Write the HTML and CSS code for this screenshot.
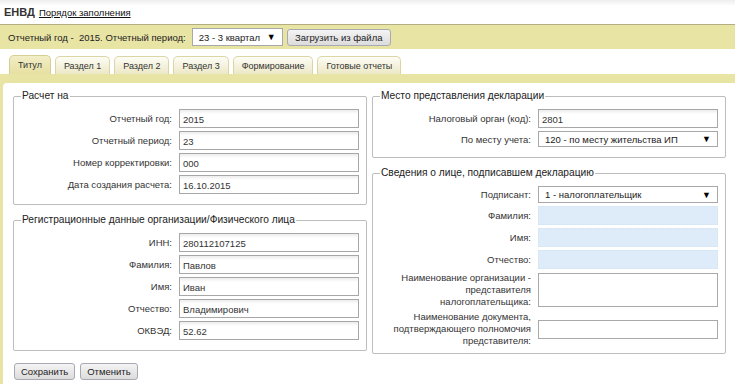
FILE: index.html
```html
<!DOCTYPE html>
<html lang="ru">
<head>
    <meta charset="UTF-8">
    <title>ЕНВД</title>
    <link rel="stylesheet" href="styles.css">
</head>
<body>

<div class="header">
    <span class="title">ЕНВД</span>
    <a href="#" class="help-link">Порядок заполнения</a>
</div>

<div class="toolbar">
    <span>Отчетный год -&nbsp; 2015. Отчетный период:</span>
    <div class="select select-period">23 - 3 квартал <span class="arrow">▼</span></div>
    <button class="btn btn-load">Загрузить из файла</button>
</div>

<ul class="tabs">
    <li class="tab active">Титул</li>
    <li class="tab">Раздел 1</li>
    <li class="tab">Раздел 2</li>
    <li class="tab">Раздел 3</li>
    <li class="tab">Формирование</li>
    <li class="tab">Готовые отчеты</li>
</ul>

<div class="tab-panel">
    <div class="panel-body">
        <div class="columns">
            <div class="column">
                <fieldset>
                    <legend>Расчет на</legend>
                    <div class="form-grid">
                        <label>Отчетный год:</label>
                        <input type="text" value="2015">
                        <label>Отчетный период:</label>
                        <input type="text" value="23">
                        <label>Номер корректировки:</label>
                        <input type="text" value="000">
                        <label>Дата создания расчета:</label>
                        <input type="text" value="16.10.2015">
                    </div>
                </fieldset>

                <fieldset>
                    <legend>Регистрационные данные организации/Физического лица</legend>
                    <div class="form-grid">
                        <label>ИНН:</label>
                        <input type="text" value="280112107125">
                        <label>Фамилия:</label>
                        <input type="text" value="Павлов">
                        <label>Имя:</label>
                        <input type="text" value="Иван">
                        <label>Отчество:</label>
                        <input type="text" value="Владимирович">
                        <label>ОКВЭД:</label>
                        <input type="text" value="52.62">
                    </div>
                </fieldset>
            </div>

            <div class="column">
                <fieldset>
                    <legend>Место представления декларации</legend>
                    <div class="form-grid">
                        <label>Налоговый орган (код):</label>
                        <input type="text" value="2801">
                        <label>По месту учета:</label>
                        <div class="select select-place">120 - по месту жительства ИП <span class="arrow">▼</span></div>
                    </div>
                </fieldset>

                <fieldset class="signer">
                    <legend>Сведения о лице, подписавшем декларацию</legend>
                    <div class="form-grid">
                        <label>Подписант:</label>
                        <div class="select select-signer">1 - налогоплательщик <span class="arrow">▼</span></div>
                        <label>Фамилия:</label>
                        <input type="text" class="disabled" disabled>
                        <label>Имя:</label>
                        <input type="text" class="disabled" disabled>
                        <label>Отчество:</label>
                        <input type="text" class="disabled" disabled>
                        <label class="multi">Наименование организации - представителя налогоплательщика:</label>
                        <textarea class="area-tall"></textarea>
                        <label class="multi">Наименование документа, подтверждающего полномочия представителя:</label>
                        <textarea class="area-short"></textarea>
                    </div>
                </fieldset>
            </div>
        </div>

        <div class="actions">
            <button class="btn">Сохранить</button>
            <button class="btn">Отменить</button>
        </div>
    </div>
</div>

</body>
</html>
```

FILE: styles.css
```css
body {
    margin: 0;
    padding: 0;
    font-family: "Liberation Sans", Arial, sans-serif;
    font-size: 9.5px;
    color: #222;
    background-color: #fff;
}
.header {
    height: 24px;
    padding-left: 4px;
    display: flex;
    align-items: center;
    gap: 4px;
    background: linear-gradient(#eeeeee, #ffffff 6px);
}
.title {
    font-size: 11px;
    font-weight: bold;
    color: #333;
}
.help-link {
    color: #111;
    font-size: 9.5px;
}
.toolbar {
    height: 24px;
    border-top: 1px solid #b3ad82;
    background-color: #e8e4a4;
    display: flex;
    align-items: center;
    padding-left: 8px;
    font-size: 9.5px;
}
.toolbar > span {
    margin-right: 6px;
}
.select {
    position: relative;
    background-color: #fff;
    border: 1px solid #a8a8a8;
    box-sizing: border-box;
    font-size: 9.5px;
    color: #222;
    padding-left: 6px;
    display: flex;
    align-items: center;
}
.select .arrow {
    position: absolute;
    right: 6px;
    font-size: 9px;
    color: #000;
}
.select-period {
    width: 91px;
    height: 18px;
}
.btn {
    font-family: "Liberation Sans", Arial, sans-serif;
    font-size: 9.5px;
    color: #222;
    background: linear-gradient(#f4f4f4, #dcdcdc);
    border: 1px solid #a9a9b4;
    border-radius: 3px;
    padding: 0 8px;
    height: 17px;
    cursor: pointer;
}
.btn-load {
    margin-left: 4px;
    width: 104px;
    padding: 0;
}
.tabs {
    list-style: none;
    margin: 6px 0 0 0;
    padding: 0 0 0 9px;
    display: flex;
    gap: 4px;
    height: 19px;
    align-items: flex-end;
}
.tab {
    height: 18px;
    box-sizing: border-box;
    padding: 0 8px;
    font-size: 9px;
    color: #333;
    display: flex;
    align-items: center;
    border: 1px solid #dcd6a6;
    border-bottom: none;
    border-radius: 5px 5px 0 0;
    background: linear-gradient(#fdfdf6, #ece8c6);
}
.tab.active {
    height: 19px;
    background: linear-gradient(#f2eec8, #e6e0a2);
    border-color: #d6cf95;
}
.tab-panel {
    background-color: #e8e4a4;
    padding: 9px 0 0 3px;
}
.panel-body {
    background-color: #fff;
    border-top-left-radius: 4px;
    padding: 6px 0 6px 10px;
}
.columns {
    display: flex;
    gap: 6px;
}
.column {
    width: 353px;
    display: flex;
    flex-direction: column;
    gap: 8px;
}
fieldset {
    margin: 0;
    padding: 6px 7px 10px 6px;
    border: 1px solid #bdbdbd;
    border-radius: 2px;
}
legend {
    font-size: 10.2px;
    line-height: 14px;
    color: #222;
    padding: 0 1px;
    margin-left: 1px;
}
.form-grid {
    display: grid;
    grid-template-columns: 152px 180px;
    column-gap: 7px;
    row-gap: 3px;
    align-items: center;
}
label {
    text-align: right;
    font-size: 9.5px;
    color: #333;
}
label.multi {
    align-self: start;
    line-height: 12px;
}
input, textarea {
    box-sizing: border-box;
    height: 19px;
    margin: 0;
    border: 1px solid #a7a7a7;
    background: linear-gradient(#ececec, #ffffff 4px);
    font-family: "Liberation Sans", Arial, sans-serif;
    font-size: 9.5px;
    color: #333;
    padding: 2px 3px 0 3px;
}
input.disabled {
    border: 1px dotted #d2e3f1;
    background: #ddecf8;
}
textarea {
    resize: none;
    background: #fff;
    border-color: #a9a9a9;
}
.area-tall {
    height: 34px;
}
.select-place {
    height: 16px;
}
.select-signer {
    height: 17px;
}
.signer {
    padding-bottom: 6px;
}
.actions {
    margin-top: 9px;
    display: flex;
    gap: 5px;
    padding-left: 1px;
}
.actions .btn {
    height: 17px;
    padding: 0 6px;
}
```
